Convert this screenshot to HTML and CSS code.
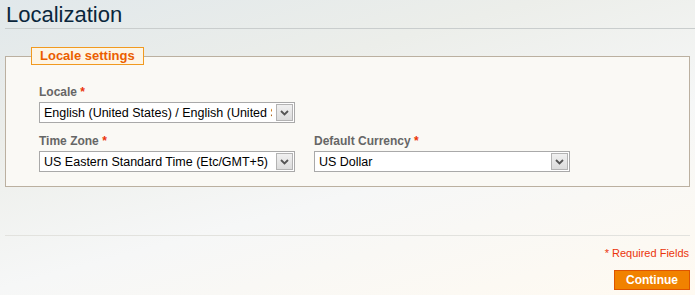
FILE: index.html
```html
<!DOCTYPE html>
<html lang="en">
<head>
    <meta charset="UTF-8">
    <title>Localization</title>
    <link rel="stylesheet" href="styles.css">
</head>
<body>
    <div class="page-head">
        <h1>Localization</h1>
    </div>
    <form id="locale-form">
        <fieldset class="box">
            <legend>Locale settings</legend>
            <div class="row">
                <div class="field">
                    <label>Locale <em>*</em></label>
                    <div class="select">
                        <select name="locale">
                            <option>English (United States) / English (United States)</option>
                        </select>
                        <span class="arrow"><svg width="9" height="6" viewBox="0 0 9 6"><polyline points="1,1 4.5,4.5 8,1" fill="none" stroke="#555" stroke-width="1.8"/></svg></span>
                    </div>
                </div>
            </div>
            <div class="row">
                <div class="field">
                    <label>Time Zone <em>*</em></label>
                    <div class="select">
                        <select name="timezone">
                            <option>US Eastern Standard Time (Etc/GMT+5)</option>
                        </select>
                        <span class="arrow"><svg width="9" height="6" viewBox="0 0 9 6"><polyline points="1,1 4.5,4.5 8,1" fill="none" stroke="#555" stroke-width="1.8"/></svg></span>
                    </div>
                </div>
                <div class="field">
                    <label>Default Currency <em>*</em></label>
                    <div class="select">
                        <select name="currency">
                            <option>US Dollar</option>
                        </select>
                        <span class="arrow"><svg width="9" height="6" viewBox="0 0 9 6"><polyline points="1,1 4.5,4.5 8,1" fill="none" stroke="#555" stroke-width="1.8"/></svg></span>
                    </div>
                </div>
            </div>
        </fieldset>
        <div class="buttons-set">
            <p class="required">* Required Fields</p>
            <button type="submit">Continue</button>
        </div>
    </form>
</body>
</html>
```

FILE: styles.css
```css
html {
    height: 100%;
}
body {
    font-family: "Liberation Sans", Arial, sans-serif;
    margin: 0;
    padding: 0 5px;
    min-height: 100%;
    background: linear-gradient(165deg, #e1e8eb 0%, #eceeea 30%, #f6f7f7 60%, #fffaf1 100%);
}
.page-head {
    margin-right: -5px;
    border-bottom: 1px solid #c9cdcd;
}
h1 {
    margin: 2px 0 0 1px;
    font-size: 22px;
    font-weight: normal;
    line-height: 26px;
    color: #0a263c;
}
.box {
    margin: 18px 0 0 0;
    padding: 20px 20px 14px 33px;
    border: 1px solid #bbb0a0;
    background: #faf9f5;
}
.box legend {
    margin-left: -8px;
    padding: 0 8px;
    border: 1px solid #f19a20;
    background: #fdf5e6;
    color: #eb5e00;
    font-size: 13px;
    font-weight: bold;
    line-height: 16px;
}
.row {
    display: grid;
    grid-template-columns: 256px 256px;
    column-gap: 19px;
}
.row + .row {
    margin-top: 11px;
}
label {
    display: block;
    font-size: 12px;
    font-weight: bold;
    line-height: 15px;
    color: #666;
}
label em {
    font-style: normal;
    color: #eb340a;
}
.select {
    display: flex;
    margin-top: 2px;
    height: 21px;
    box-sizing: border-box;
    border: 1px solid #a9a9a9;
    background: #fff;
}
.select select {
    flex: 1;
    min-width: 0;
    margin: 0;
    padding: 0 3px 0 4px;
    border: 0;
    background: transparent;
    appearance: none;
    -webkit-appearance: none;
    font-family: "Liberation Sans", Arial, sans-serif;
    font-size: 12.5px;
    color: #000;
    outline: none;
}
.arrow {
    display: flex;
    align-items: center;
    justify-content: center;
    width: 15px;
    margin: 1px;
    border: 1px solid #b3b3b3;
    background: linear-gradient(#f0f0f0, #dcdcdc);
}
.buttons-set {
    margin-top: 48px;
    border-top: 1px solid #e2e2de;
    text-align: right;
}
.required {
    margin: 11px 1px 0 0;
    font-size: 11px;
    line-height: 13px;
    color: #eb340a;
}
button {
    margin: 10px 0 0 0;
    padding: 0 11px;
    height: 20px;
    border: 1px solid #de5400;
    background: #f18200;
    color: #fff;
    font-family: "Liberation Sans", Arial, sans-serif;
    font-size: 12px;
    font-weight: bold;
    line-height: 18px;
    cursor: pointer;
}
```
